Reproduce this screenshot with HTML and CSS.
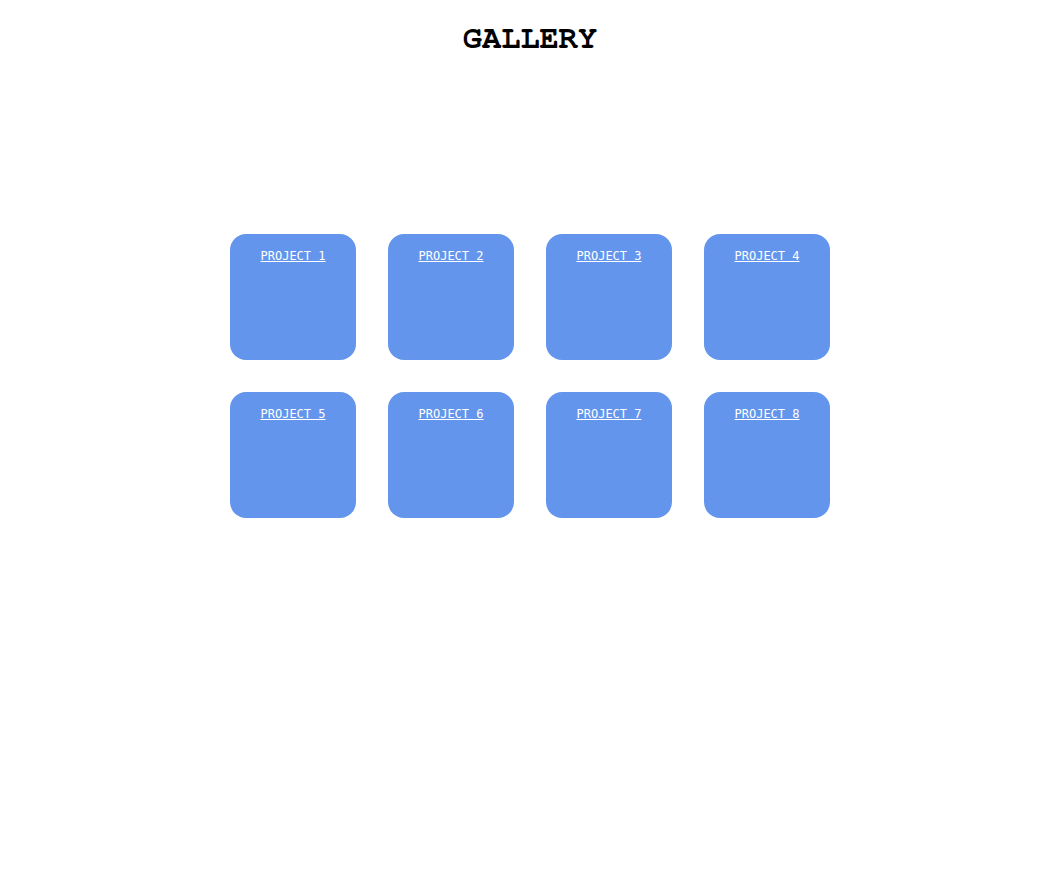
FILE: index.html
```html
<!DOCTYPE html>
<html lang="en">
<head>
<meta charset="utf-8">
<title>Gallery</title>
<link rel="stylesheet" href="styles.css">
</head>
<body>
<header class="header">
  <h1 class="title">GALLERY</h1>
</header>
<main class="gallery">
  <div class="grid">
    <div class="card"><a class="card-link" href="#">PROJECT 1</a></div>
    <div class="card"><a class="card-link" href="#">PROJECT 2</a></div>
    <div class="card"><a class="card-link" href="#">PROJECT 3</a></div>
    <div class="card"><a class="card-link" href="#">PROJECT 4</a></div>
    <div class="card"><a class="card-link" href="#">PROJECT 5</a></div>
    <div class="card"><a class="card-link" href="#">PROJECT 6</a></div>
    <div class="card"><a class="card-link" href="#">PROJECT 7</a></div>
    <div class="card"><a class="card-link" href="#">PROJECT 8</a></div>
  </div>
</main>
</body>
</html>
```
FILE: styles.css
```css
html, body {
  margin: 0;
  padding: 0;
  background: #ffffff;
}
body {
  font-family: "Liberation Mono", monospace;
}
.header {
  display: flex;
  justify-content: center;
  padding-top: 20px;
}
.title {
  margin: 0;
  font-family: "Nimbus Mono PS", "Nimbus Mono L", "FreeMono", "Courier 10 Pitch", Courier, "Liberation Mono", monospace;
  font-size: 32px;
  font-weight: bold;
  line-height: 36px;
  color: #000;
}
.gallery {
  display: flex;
  justify-content: center;
  padding-top: 178px;
}
.grid {
  display: grid;
  grid-template-columns: repeat(4, 126px);
  grid-auto-rows: 126px;
  gap: 32px;
}
.card {
  background: #6495ed;
  border-radius: 16px;
  display: flex;
  justify-content: center;
  align-items: flex-start;
  padding-top: 15px;
  box-sizing: border-box;
}
.card-link {
  font-family: "DejaVu Sans Mono", monospace;
  font-size: 12px;
  font-weight: 500;
  line-height: 14px;
  color: #ffffff;
  text-decoration: underline;
}
```
